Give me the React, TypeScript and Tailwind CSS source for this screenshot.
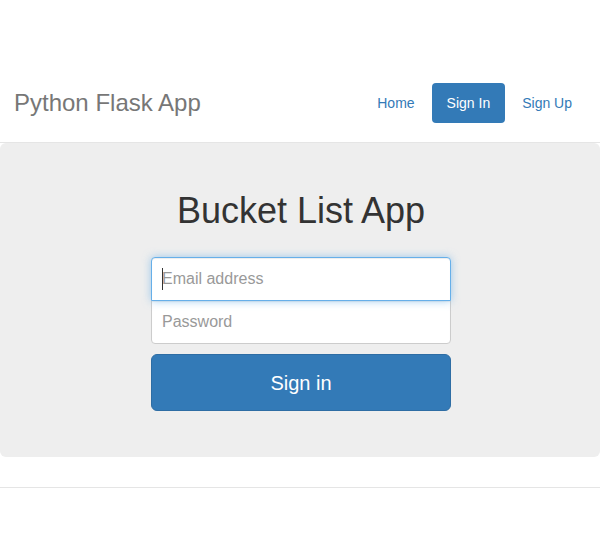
import { useState } from "react";

const navItems = ["Home", "Sign In", "Sign Up"];

export default function App() {
  const [email, setEmail] = useState("");
  const [password, setPassword] = useState("");
  const active = "Sign In";

  return (
    <div className="min-h-[550px] bg-white font-['Liberation_Sans',Arial,sans-serif] text-[14px] text-[#333]">
      <div className="pt-[83px]">
        {/* header */}
        <div className="flex items-center justify-between border-b border-[#e5e5e5] pb-[19px] pl-[14px] pr-[13px]">
          <h3 className="text-[24px] leading-[40px] text-[#777]">Python Flask App</h3>
          <nav className="flex gap-[2px]">
            {navItems.map((item) => (
              <a
                key={item}
                href="#"
                className={
                  item === active
                    ? "rounded px-[15px] py-[10px] leading-[20px] bg-[#337ab7] text-white"
                    : "rounded px-[15px] py-[10px] leading-[20px] text-[#337ab7]"
                }
              >
                {item}
              </a>
            ))}
          </nav>
        </div>

        {/* jumbotron */}
        <div className="rounded-md bg-[#eee] pl-[2px] pt-[48px] pb-[46px] text-center">
          <h1 className="text-[36px] leading-[40px] text-[#333]">Bucket List App</h1>
          <form className="mx-auto mt-[26px] w-[300px]" onSubmit={(e) => e.preventDefault()}>
            <div className="relative">
              <input
                type="email"
                value={email}
                onChange={(e) => setEmail(e.target.value)}
                placeholder="Email address"
                className="relative z-10 block h-[44px] w-full rounded-t-[4px] border border-[#66afe9] bg-white px-[10px] text-[16px] text-[#555] caret-transparent outline-none shadow-[inset_0_1px_1px_rgba(0,0,0,0.075),0_0_8px_rgba(102,175,233,0.6)] placeholder:text-[#999]"
              />
              {email === "" && (
                <span className="absolute left-[11px] top-[11px] z-20 h-[22px] w-px bg-[#333]" />
              )}
            </div>
            <input
              type="password"
              value={password}
              onChange={(e) => setPassword(e.target.value)}
              placeholder="Password"
              className="-mt-px block h-[44px] w-full rounded-b-[4px] border border-[#ccc] bg-white px-[10px] text-[16px] text-[#555] outline-none shadow-[inset_0_1px_1px_rgba(0,0,0,0.075)] placeholder:text-[#999]"
            />
            <button
              type="submit"
              className="mt-[10px] block h-[57px] w-full rounded-[6px] border border-[#2e6da4] bg-[#337ab7] text-[20px] text-white"
            >
              Sign in
            </button>
          </form>
        </div>

        {/* footer */}
        <footer className="mt-[30px] border-t border-[#e5e5e5]" />
      </div>
    </div>
  );
}
